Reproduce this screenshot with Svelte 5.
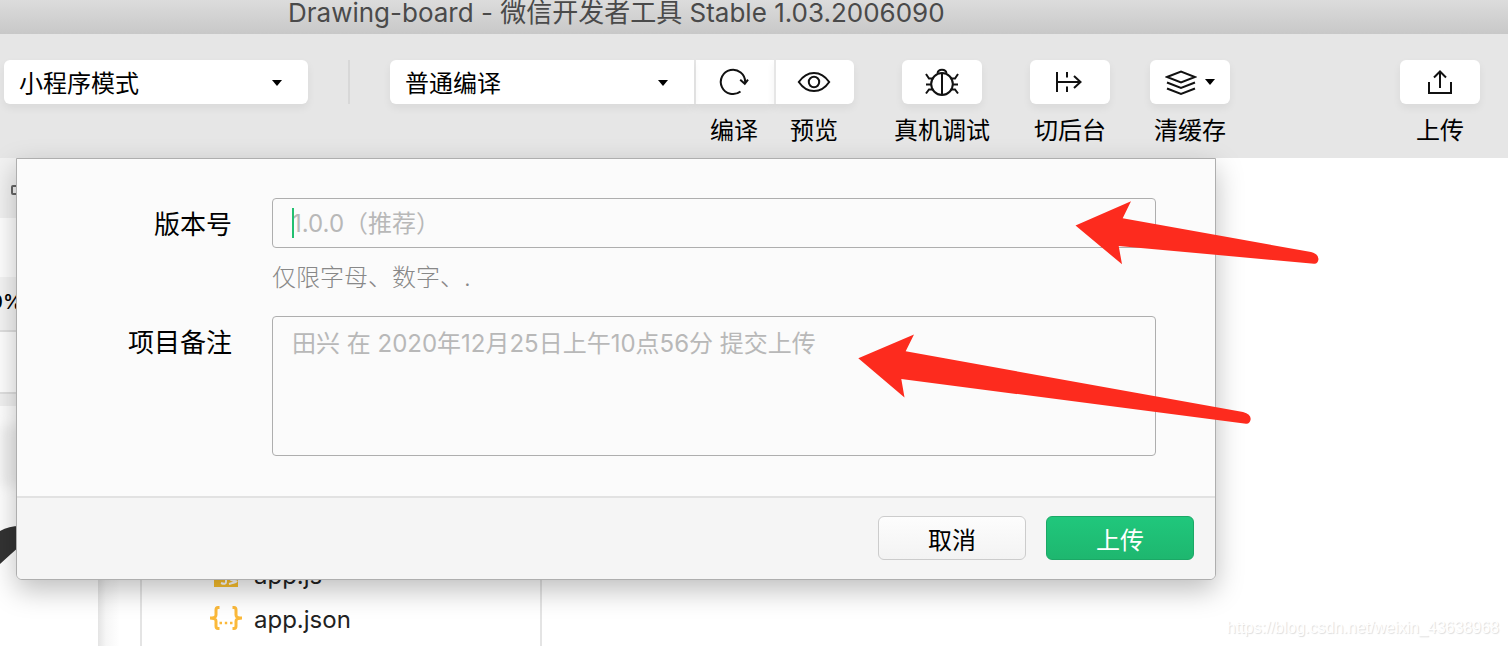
<script>
  const modes = ['小程序模式'];
  const compileModes = ['普通编译'];

  let mode = modes[0];
  let compileMode = compileModes[0];
  let version = '';
  let remark = '';
  let showDialog = true;

  function closeDialog() {
    showDialog = false;
  }
</script>

<main>
  <header>Drawing-board - 微信开发者工具 Stable 1.03.2006090</header>

  <nav>
    <div class="select">
      <select bind:value={mode} aria-label="小程序模式">
        {#each modes as m}
          <option>{m}</option>
        {/each}
      </select>
      <i class="arrow"></i>
    </div>

    <div class="divider"></div>

    <div class="group">
      <div class="select">
        <select bind:value={compileMode} aria-label="普通编译">
          {#each compileModes as m}
            <option>{m}</option>
          {/each}
        </select>
        <i class="arrow"></i>
      </div>
      <button class="tool">
        <span class="key">
          <svg width="32" height="32" viewBox="0 0 32 32">
            <path d="M22.500 25.500A12.200 12.200 0 1 1 27.200 16" />
            <path d="M22.200 13.700L26.800 17.700L30 13.700" />
          </svg>
        </span>
        <span class="name">编译</span>
      </button>
      <button class="tool">
        <span class="key">
          <svg width="34" height="32" viewBox="0 0 34 32">
            <path d="M1.8 16Q8 6.9 17 6.9T32.2 16Q26 25.1 17 25.1T1.8 16Z" />
            <circle cx="17" cy="16" r="5.2" />
          </svg>
        </span>
        <span class="name">预览</span>
      </button>
    </div>

    <div class="debug">
      <button class="tool">
        <span class="key">
          <svg width="36" height="32" viewBox="0 0 36 32">
            <ellipse cx="18" cy="18" rx="10.8" ry="11" />
            <path d="M18 7V29M13.5 7.5C14 2.5 22 2.5 22.5 7.5" />
            <path d="M9.5 12.5H5L2 8M7 18.5H2M9.5 23.5H5L2 27.5M26.5 12.5H31L34 8M29 18.5H34M26.5 23.5H31L34 27.5" />
          </svg>
        </span>
        <span class="name">真机调试</span>
      </button>
      <button class="tool">
        <span class="key">
          <svg width="32" height="32" viewBox="0 0 32 32">
            <path d="M3 6V26M3 16H27M13 6V11.5M13 20.5V26M20 10L26.5 16L20 22" />
          </svg>
        </span>
        <span class="name">切后台</span>
      </button>
    </div>

    <button class="tool cache">
      <span class="key">
        <svg width="32" height="32" viewBox="0 0 32 32">
          <path d="M2 11L16 5.5L30 11L16 16.5ZM2 16.5L16 22L30 16.5M2 22.5L16 28L30 22.5" />
        </svg>
        <i class="arrow"></i>
      </span>
      <span class="name">清缓存</span>
    </button>

    <button class="tool upload">
      <span class="key">
        <svg width="32" height="32" viewBox="0 0 32 32">
          <path d="M5 16V27H27V16M16 22V6M10 11.5L16 5.5L22 11.5" />
        </svg>
      </span>
      <span class="name">上传</span>
    </button>
  </nav>

  <section class="workspace">
    <div class="simulator">
      <div class="device">
        <svg width="10" height="12" viewBox="0 0 10 12"><rect x="2" y="2" width="10" height="8" rx="1" /></svg>
      </div>
      <div class="blank"></div>
      <div class="zoom">0%</div>
      <div class="bar"></div>
      <div class="strip"></div>
      <div class="screen">
        <div class="card"></div>
        <svg width="30" height="42" viewBox="0 0 30 42"><path d="M0 5Q9 0 20 0V20Q12 27 0 38Z" /></svg>
      </div>
    </div>

    <div class="gutter"></div>

    <ul class="files">
      <li>
        <svg width="32" height="32" viewBox="0 0 32 32">
          <rect x="4" y="4" width="24" height="24" fill="#fbc02d" />
          <path d="M16 15V23Q16 26 11 24M25 16Q19 14 19.500 18T25 22T19 25" fill="none" stroke="#fff" stroke-width="2" />
        </svg>
        app.js
      </li>
      <li>
        <svg width="32" height="32" viewBox="0 0 32 32" fill="none" stroke="#fbb93a" stroke-width="3">
          <path d="M9.500 4.500H8Q6 4.500 6 7V12Q6 15 0 15Q6 15 6 18V23Q6 25.500 8 25.500H9.500M22.500 4.500H24Q26 4.500 26 7V12Q26 15 32 15Q26 15 26 18V23Q26 25.500 24 25.500H22.500" />
          <path d="M9.500 20H12M14.800 20H17.200M20 20H22.500" stroke-width="2.500" />
        </svg>
        app.json
      </li>
    </ul>

    <div class="editor"></div>

    {#if showDialog}
      <form class="dialog" on:submit|preventDefault={closeDialog}>
        <div class="fields">
          <label for="version">版本号</label>
          <div class="field">
            <input id="version" bind:value={version} placeholder="1.0.0（推荐）">
            <i class="caret"></i>
            <p>仅限字母、数字、.</p>
          </div>

          <label for="remark">项目备注</label>
          <textarea id="remark" bind:value={remark} placeholder="田兴 在 2020年12月25日上午10点56分 提交上传"></textarea>
        </div>

        <footer>
          <button type="button" class="btn" on:click={closeDialog}>取消</button>
          <button type="submit" class="btn primary">上传</button>
        </footer>
      </form>
    {/if}

    <svg class="pointers" width="461" height="223" viewBox="858 201 461 223">
      <path d="M1075.500 225.500L1131 201.300L1122.700 218.300L1311 252Q1318.500 254 1318.500 259Q1318 264 1314 263.700L1118.700 246L1122 264.300Z" />
      <path d="M858.300 358.300L914 334.500L905.700 351.300L1243 412Q1250.700 414 1250.700 419Q1250 424 1246 423.700L901.300 379L904.500 397.500Z" />
    </svg>

    <span class="watermark">https://blog.csdn.net/weixin_43638968</span>
  </section>
</main>

<style>
  :global(body) {
    margin: 0;
  }

  main {
    display: flex;
    flex-direction: column;
    min-height: 100vh;
    overflow: hidden;
    background: #fff;
    color: #000;
    font-family: Inter, "Noto Sans CJK SC", sans-serif;
    font-size: 24px;
  }

  button, select, input, textarea {
    box-sizing: border-box;
    margin: 0;
    padding: 0;
    border: 0;
    font: inherit;
    color: inherit;
  }

  header {
    height: 34px;
    padding-left: 288px;
    background: linear-gradient(#dcdcdc, #c8c8c8);
    color: #4a4a4a;
    font-size: 26px;
    line-height: 26px;
    white-space: nowrap;
  }

  nav {
    display: flex;
    align-items: flex-start;
    height: 98px;
    padding: 26px 28px 0 4px;
    background: #e6e6e6;
  }

  .select {
    position: relative;
    width: 304px;
    height: 44px;
  }

  select {
    width: 100%;
    height: 44px;
    padding: 2px 15px 0;
    border-radius: 6px;
    background: #fff;
    box-shadow: 0 4px 8px rgba(0, 0, 0, 0.06);
    appearance: none;
  }

  .arrow {
    width: 0;
    border: 5px solid transparent;
    border-top: 6px solid #000;
    border-bottom: 0;
  }

  .select .arrow {
    position: absolute;
    top: 20px;
    right: 26px;
  }

  .divider {
    width: 2px;
    height: 44px;
    margin: 0 40px;
    background: #d8d8d8;
  }

  .group {
    display: flex;
  }

  .group select {
    border-radius: 6px 0 0 6px;
  }

  .tool {
    display: flex;
    flex-direction: column;
    align-items: center;
    gap: 15px;
    width: 80px;
    background: none;
  }

  .key {
    display: flex;
    align-items: center;
    justify-content: center;
    gap: 8px;
    width: 100%;
    height: 44px;
    border-radius: 6px;
    background: #fff;
    box-shadow: 0 4px 8px rgba(0, 0, 0, 0.06);
  }

  .group .key {
    border-radius: 0;
    box-shadow: inset 2px 0 #e6e6e6, 0 4px 8px rgba(0, 0, 0, 0.06);
  }

  .group .tool:last-child .key {
    border-radius: 0 6px 6px 0;
  }

  .key svg {
    fill: none;
    stroke: #111;
    stroke-width: 2;
  }

  .name {
    line-height: 24px;
    white-space: nowrap;
  }

  .debug {
    display: flex;
    gap: 48px;
    margin: 0 40px 0 48px;
  }

  .upload {
    margin-left: auto;
  }

  .workspace {
    position: relative;
    display: flex;
    flex: 1;
  }

  .simulator {
    width: 98px;
  }

  .device {
    display: flex;
    align-items: center;
    height: 60px;
    padding-left: 10px;
    background: #f2f2f2;
  }

  .device svg {
    margin-top: 4px;
    fill: none;
    stroke: #666;
    stroke-width: 2;
  }

  .blank {
    height: 59px;
  }

  .zoom {
    height: 53px;
    border-bottom: 2px solid #e0e0e0;
    background: #f5f5f5;
    font-size: 20px;
    font-weight: 500;
    line-height: 50px;
    text-indent: -10px;
  }

  .bar {
    height: 60px;
    border-bottom: 2px solid #e0e0e0;
  }

  .strip {
    height: 12px;
    background: #f2f2f2;
  }

  .screen {
    padding-top: 20px;
  }

  .card {
    height: 60px;
    margin-bottom: 40px;
    background: #f0f0f0;
    filter: blur(6px);
  }

  .screen svg {
    display: block;
    fill: #333;
  }

  .gutter {
    width: 42px;
    background: linear-gradient(90deg, #e4e4e4, #f6f6f6 8px, #fff 22px);
  }

  .files {
    width: 398px;
    margin: 0;
    padding: 395px 0 0;
    border: solid #e4e4e4;
    border-width: 0 2px;
    list-style: none;
  }

  li {
    display: flex;
    align-items: center;
    gap: 12px;
    height: 44px;
    padding-left: 68px;
    color: #222;
  }

  .editor {
    flex: 1;
  }

  .dialog {
    position: absolute;
    top: 0;
    left: 16px;
    box-sizing: border-box;
    width: 1200px;
    border: 1px solid #aeaeae;
    border-radius: 0 0 6px 6px;
    background: #fbfbfb;
    box-shadow: 0 10px 28px rgba(0, 0, 0, 0.26);
    overflow: hidden;
  }

  .fields {
    display: grid;
    grid-template-columns: 215px 1fr;
    column-gap: 40px;
    padding: 39px 59px 40px 0;
  }

  label {
    font-size: 26px;
    line-height: 54px;
    text-align: right;
  }

  .field {
    position: relative;
    height: 118px;
  }

  input, textarea {
    width: 100%;
    border: 1px solid #aeaeae;
    border-radius: 4px;
    background: #fbfbfb;
    outline: none;
  }

  input {
    display: block;
    height: 50px;
    padding: 0 19px;
  }

  textarea {
    height: 140px;
    padding: 9px 19px;
    line-height: 36px;
    resize: none;
  }

  input::placeholder, textarea::placeholder {
    color: #b8b8b8;
    opacity: 1;
  }

  .caret {
    position: absolute;
    top: 10px;
    left: 20px;
    width: 2px;
    height: 30px;
    background: #22c070;
  }

  p {
    margin: 12px 0 0;
    color: #888;
    font-weight: 300;
    line-height: 36px;
  }

  footer {
    display: flex;
    justify-content: flex-end;
    gap: 20px;
    padding: 18px 21px 19px;
    border-top: 2px solid #e2e2e2;
    background: #f5f5f5;
  }

  .btn {
    width: 148px;
    height: 44px;
    border: 1px solid #ccc;
    border-radius: 6px;
    background: linear-gradient(#fdfdfd, #f3f3f3);
  }

  .primary {
    border-color: #1ba866;
    background: linear-gradient(#20c77c, #1eb76f);
    color: #fff;
  }

  .pointers {
    position: absolute;
    top: 43px;
    left: 858px;
    fill: #fd2b1e;
    pointer-events: none;
  }

  .watermark {
    position: absolute;
    right: 9px;
    bottom: 8px;
    color: #fff;
    font-family: "Liberation Sans", Arial, sans-serif;
    font-size: 16px;
    line-height: 20px;
    text-shadow: 1px 1px 1px #ddd;
  }
</style>
